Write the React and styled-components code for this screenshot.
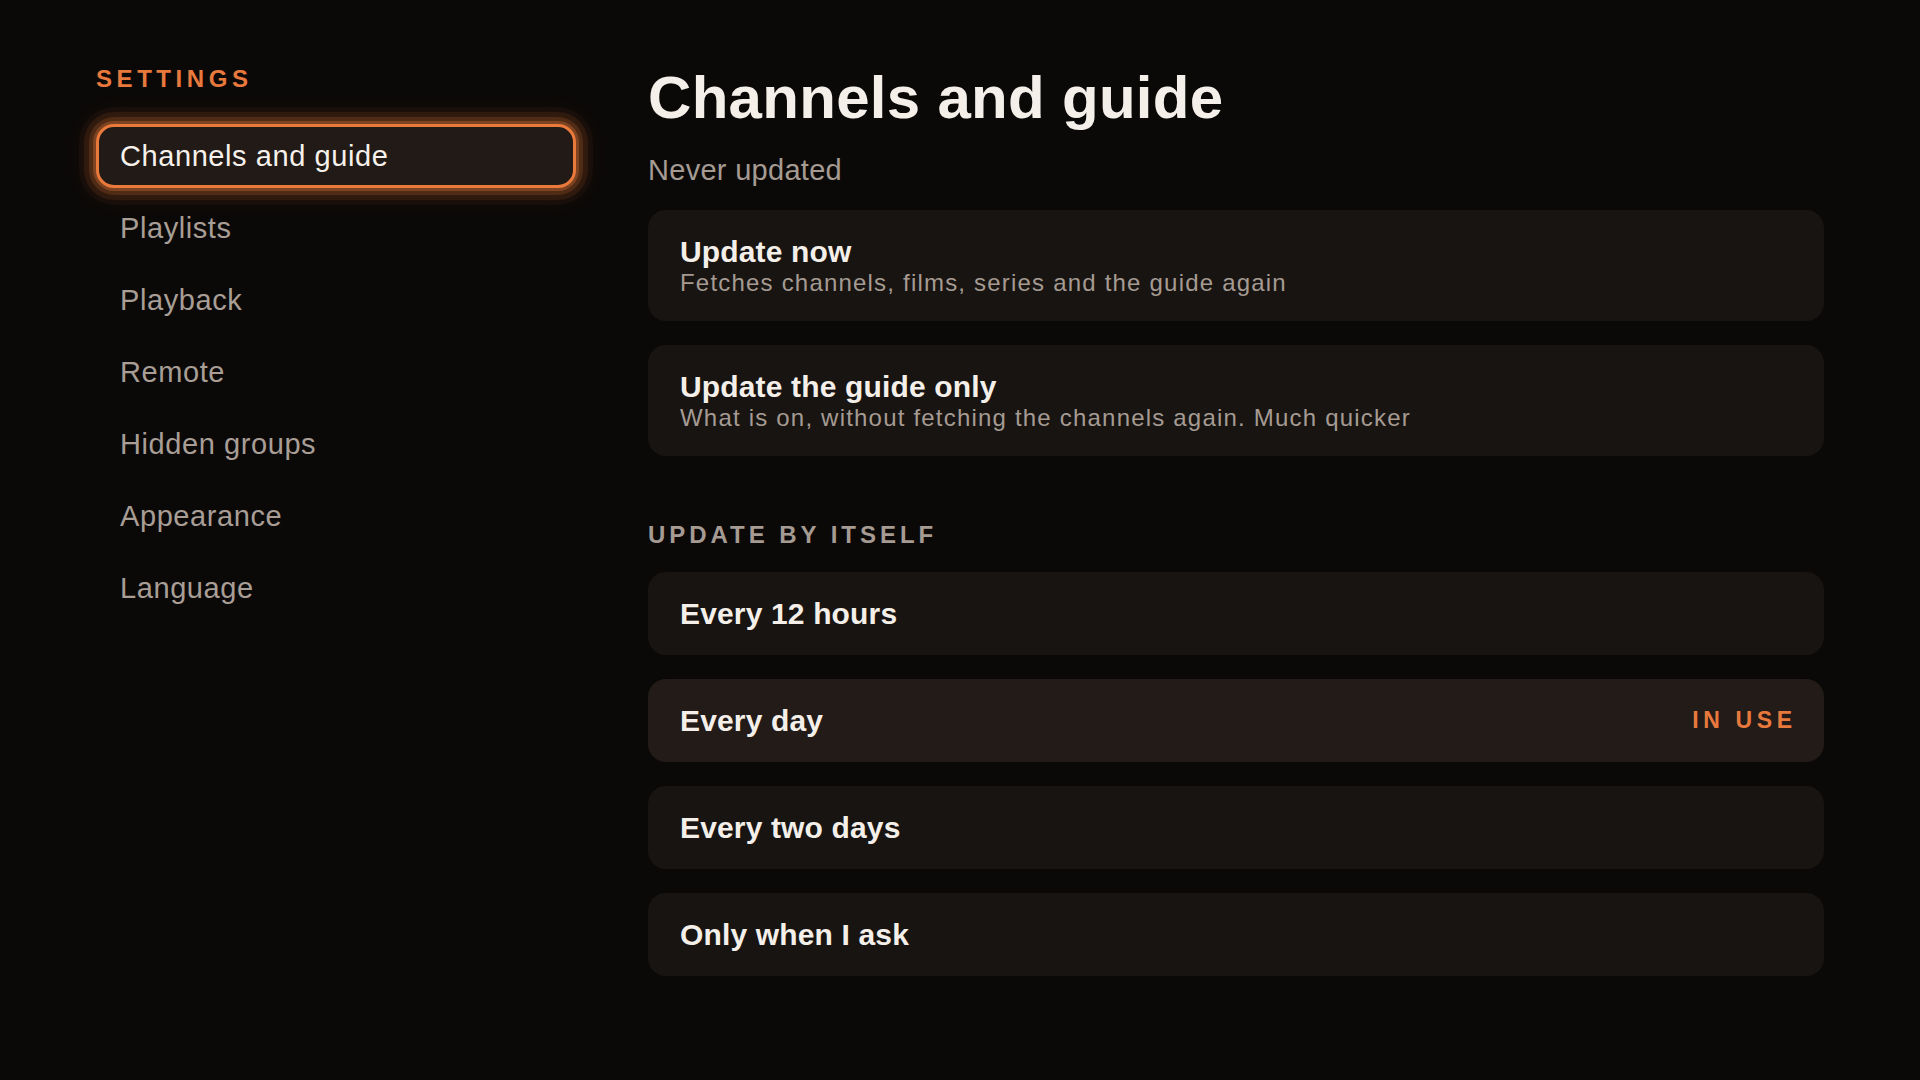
import styled, { createGlobalStyle } from 'styled-components';

const GlobalStyle = createGlobalStyle`
  html, body {
    margin: 0;
    padding: 0;
    background: #0b0908;
  }
  body {
    font-family: 'Liberation Sans', Arial, sans-serif;
    color: #f4efe9;
  }
  * {
    box-sizing: border-box;
  }
`;

const navItems = [
  'Channels and guide',
  'Playlists',
  'Playback',
  'Remote',
  'Hidden groups',
  'Appearance',
  'Language',
];

const actions = [
  { title: 'Update now', desc: 'Fetches channels, films, series and the guide again' },
  { title: 'Update the guide only', desc: 'What is on, without fetching the channels again. Much quicker' },
];

const intervals = ['Every 12 hours', 'Every day', 'Every two days', 'Only when I ask'];

const App = () => {
  const active = 'Channels and guide';
  const inUse = 'Every day';

  return (
    <>
      <GlobalStyle />
      <Page>
        <Sidebar>
          <SideLabel>Settings</SideLabel>
          <NavList>
            {navItems.map(item => (
              <NavItem key={item} $active={item === active}>
                {item}
              </NavItem>
            ))}
          </NavList>
        </Sidebar>

        <Main>
          <Title>Channels and guide</Title>
          <Status>Never updated</Status>

          <CardList>
            {actions.map(a => (
              <ActionCard key={a.title}>
                <CardTitle>{a.title}</CardTitle>
                <CardDesc>{a.desc}</CardDesc>
              </ActionCard>
            ))}
          </CardList>

          {/* 자동 업데이트 */}
          <SectionLabel>Update by itself</SectionLabel>
          <CardList>
            {intervals.map(item => (
              <OptionRow key={item} $selected={item === inUse}>
                <CardTitle>{item}</CardTitle>
                {item === inUse && <InUse>In use</InUse>}
              </OptionRow>
            ))}
          </CardList>
        </Main>
      </Page>
    </>
  );
};

export default App;

const Page = styled.div`
  display: grid;
  grid-template-columns: 480px 1fr;
  column-gap: 72px;
  min-height: 1080px;
  padding: 64px 96px 0;
`;

const Sidebar = styled.nav`
  display: flex;
  flex-direction: column;
`;

const SideLabel = styled.div`
  font-size: 24px;
  line-height: 30px;
  font-weight: 700;
  letter-spacing: 0.19em;
  text-transform: uppercase;
  color: #e8793d;
  margin-bottom: 30px;
`;

const NavList = styled.ul`
  list-style: none;
  margin: 0;
  padding: 0;
  display: flex;
  flex-direction: column;
  gap: 8px;
`;

const NavItem = styled.li`
  height: 64px;
  display: flex;
  align-items: center;
  padding: 0 21px;
  border: 3px solid ${p => (p.$active ? '#ea7a3c' : 'transparent')};
  border-radius: 18px;
  background: ${p => (p.$active ? '#211a16' : 'transparent')};
  color: ${p => (p.$active ? '#f6f1eb' : '#a89e96')};
  font-size: 29px;
  letter-spacing: 0.02em;
  box-shadow: ${p =>
    p.$active
      ? `0 0 0 3px rgba(234, 122, 60, 0.3),
         0 0 0 7px rgba(234, 122, 60, 0.17),
         0 0 0 12px rgba(234, 122, 60, 0.1),
         0 0 0 17px rgba(234, 122, 60, 0.05),
         0 0 24px 12px rgba(234, 122, 60, 0.05)`
      : 'none'};
`;

const Main = styled.main`
  display: flex;
  flex-direction: column;
`;

const Title = styled.h1`
  margin: 1px 0 0;
  font-size: 60px;
  line-height: 66px;
  font-weight: 700;
  letter-spacing: 0.005em;
  color: #f4efe9;
`;

const Status = styled.div`
  margin-top: 21px;
  font-size: 29px;
  line-height: 36px;
  letter-spacing: 0.01em;
  color: #a59b93;
`;

const CardList = styled.div`
  display: flex;
  flex-direction: column;
  gap: 24px;
  margin-top: 22px;
`;

const ActionCard = styled.div`
  background: #181411;
  border-radius: 18px;
  padding: 24px 32px;
  display: flex;
  flex-direction: column;
`;

const CardTitle = styled.div`
  font-size: 30px;
  line-height: 35px;
  font-weight: 700;
  letter-spacing: 0.005em;
  color: #f4efe9;
`;

const CardDesc = styled.div`
  font-size: 24px;
  line-height: 28px;
  letter-spacing: 1.2px;
  color: #a59b93;
`;

const SectionLabel = styled.div`
  margin-top: 64px;
  font-size: 24px;
  line-height: 30px;
  font-weight: 700;
  letter-spacing: 0.165em;
  text-transform: uppercase;
  color: #a59b93;
`;

const OptionRow = styled.div`
  height: 83px;
  display: flex;
  align-items: center;
  justify-content: space-between;
  padding: 0 32px;
  border-radius: 18px;
  background: ${p => (p.$selected ? '#221b18' : '#181411')};
`;

const InUse = styled.span`
  font-size: 23px;
  font-weight: 700;
  letter-spacing: 0.2em;
  margin-right: -0.2em;
  text-transform: uppercase;
  color: #e8793d;
`;
